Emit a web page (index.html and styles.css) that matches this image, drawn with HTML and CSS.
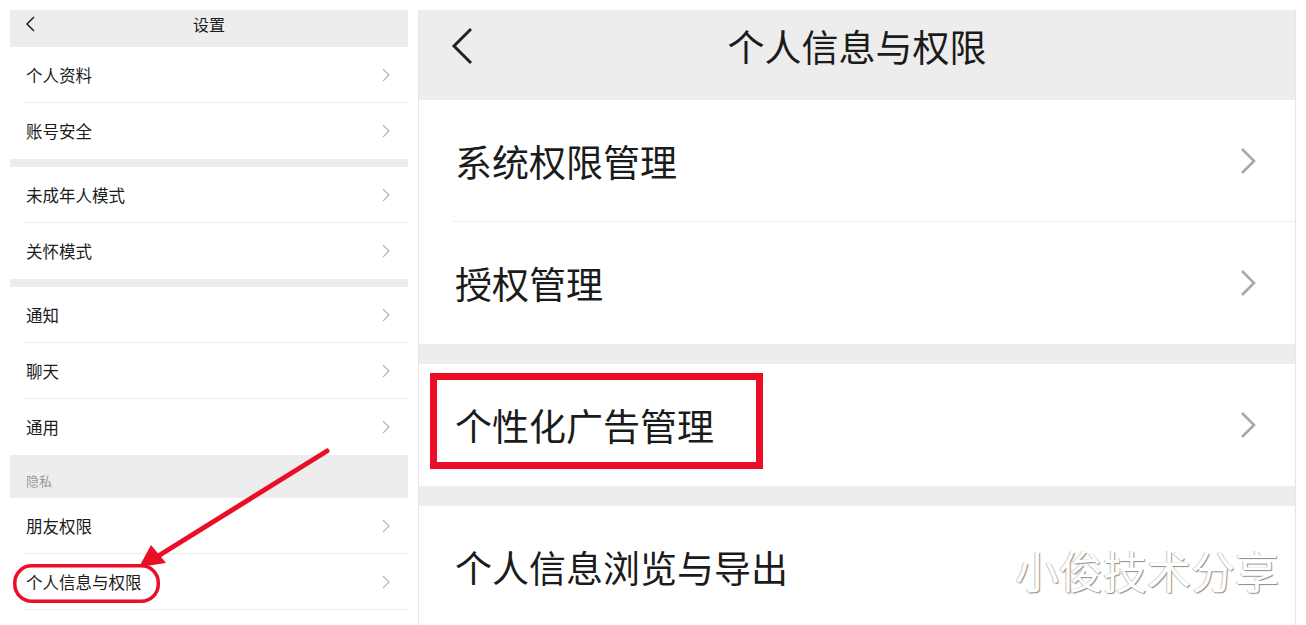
FILE: index.html
```html
<!DOCTYPE html>
<html lang="zh-CN">
<head>
    <meta charset="UTF-8">
    <meta name="viewport" content="width=device-width, initial-scale=1.0">
    <title>个人信息与权限</title>
    <link rel="stylesheet" href="styles.css">
</head>
<body>

    <!-- Left: settings list -->
    <div class="panel-small">
        <div class="nav-small">
            <svg class="back" width="10" height="16" viewBox="0 0 10 16"><polyline points="9,1 2,8 9,15" fill="none" stroke="#222" stroke-width="1.5"/></svg>
            <span class="nav-title">设置</span>
            <span></span>
        </div>

        <div class="row-s">个人资料<svg width="8" height="14" viewBox="0 0 8 14"><polyline points="1,1 7,7 1,13" fill="none" stroke="#b8b8b8" stroke-width="1.3"/></svg></div>
        <div class="row-s last">账号安全<svg width="8" height="14" viewBox="0 0 8 14"><polyline points="1,1 7,7 1,13" fill="none" stroke="#b8b8b8" stroke-width="1.3"/></svg></div>
        <div class="gap-s"></div>

        <div class="row-s">未成年人模式<svg width="8" height="14" viewBox="0 0 8 14"><polyline points="1,1 7,7 1,13" fill="none" stroke="#b8b8b8" stroke-width="1.3"/></svg></div>
        <div class="row-s last">关怀模式<svg width="8" height="14" viewBox="0 0 8 14"><polyline points="1,1 7,7 1,13" fill="none" stroke="#b8b8b8" stroke-width="1.3"/></svg></div>
        <div class="gap-s"></div>

        <div class="row-s">通知<svg width="8" height="14" viewBox="0 0 8 14"><polyline points="1,1 7,7 1,13" fill="none" stroke="#b8b8b8" stroke-width="1.3"/></svg></div>
        <div class="row-s">聊天<svg width="8" height="14" viewBox="0 0 8 14"><polyline points="1,1 7,7 1,13" fill="none" stroke="#b8b8b8" stroke-width="1.3"/></svg></div>
        <div class="row-s last">通用<svg width="8" height="14" viewBox="0 0 8 14"><polyline points="1,1 7,7 1,13" fill="none" stroke="#b8b8b8" stroke-width="1.3"/></svg></div>

        <div class="section-label">隐私</div>
        <div class="row-s">朋友权限<svg width="8" height="14" viewBox="0 0 8 14"><polyline points="1,1 7,7 1,13" fill="none" stroke="#b8b8b8" stroke-width="1.3"/></svg></div>
        <div class="row-s">个人信息与权限<svg width="8" height="14" viewBox="0 0 8 14"><polyline points="1,1 7,7 1,13" fill="none" stroke="#b8b8b8" stroke-width="1.3"/></svg></div>
    </div>

    <!-- Right: zoomed page -->
    <div class="panel-big">
        <div class="nav-big">
            <svg class="back" width="22" height="38" viewBox="0 0 22 38"><polyline points="20,2 3,19 20,36" fill="none" stroke="#222" stroke-width="3"/></svg>
            <span class="nav-title">个人信息与权限</span>
            <span></span>
        </div>

        <div class="row-b">系统权限管理<svg width="16" height="28" viewBox="0 0 16 28"><polyline points="2,2 14,14 2,26" fill="none" stroke="#a8a8a8" stroke-width="2.6"/></svg></div>
        <div class="row-b last">授权管理<svg width="16" height="28" viewBox="0 0 16 28"><polyline points="2,2 14,14 2,26" fill="none" stroke="#a8a8a8" stroke-width="2.6"/></svg></div>
        <div class="gap-b"></div>

        <div class="row-b last">个性化广告管理<svg width="16" height="28" viewBox="0 0 16 28"><polyline points="2,2 14,14 2,26" fill="none" stroke="#a8a8a8" stroke-width="2.6"/></svg></div>
        <div class="gap-b"></div>

        <div class="row-b last">个人信息浏览与导出</div>
    </div>

    <!-- Annotations drawn on top of the screenshots -->
    <svg class="marks" width="1306" height="625" viewBox="0 0 1306 625">
        <rect x="433.5" y="376.5" width="326" height="89" fill="none" stroke="#ea0f27" stroke-width="7"/>
        <rect x="14.8" y="565.8" width="143.5" height="35.5" rx="17" fill="none" stroke="#ea0f27" stroke-width="3.5"/>
        <line x1="327" y1="451" x2="155" y2="558" stroke="#ea0f27" stroke-width="5" stroke-linecap="round"/>
        <polygon points="139,567 151,545 166,563" fill="#ea0f27"/>
    </svg>

    <div class="watermark">小俊技术分享</div>

</body>
</html>
```

FILE: styles.css
```css
/* Global */
* {
    margin: 0;
    padding: 0;
    box-sizing: border-box;
}

body {
    position: relative;
    display: flex;
    gap: 10px;
    width: 1306px;
    height: 625px;
    padding: 10px 10px 0;
    overflow: hidden;
    background: #fff;
    color: #1b1b1b;
    font-family: "Noto Sans CJK SC", "Noto Sans", sans-serif;
}

svg {
    display: block;
    flex-shrink: 0;
}

/* Left panel */
.panel-small {
    width: 398px;
    background: #fff;
}

.nav-small {
    display: grid;
    grid-template-columns: 1fr auto 1fr;
    align-items: center;
    height: 37px;
    padding: 0 15px 9px;
    background: #ededed;
}

.nav-small .nav-title {
    font-size: 16px;
    line-height: 1;
}

.row-s {
    display: flex;
    align-items: center;
    justify-content: space-between;
    height: 56px;
    margin-left: 14px;
    padding: 0 18px 0 2px;
    border-bottom: 1px solid #ececec;
    font-size: 16.5px;
}

.row-s.last {
    border-bottom: none;
}

.gap-s {
    height: 8px;
    background: #ededed;
}

.section-label {
    display: flex;
    align-items: flex-end;
    height: 43px;
    padding: 0 0 11px 16px;
    background: #ededed;
    color: #9a9a9a;
    font-size: 13px;
    line-height: 1;
}

/* Right panel */
.panel-big {
    width: 878px;
    background: #fff;
    border-left: 1px solid #e6e6e6;
    border-right: 1px solid #e6e6e6;
}

.nav-big {
    display: grid;
    grid-template-columns: 1fr auto 1fr;
    align-items: center;
    height: 90px;
    padding: 0 32px 18px;
    background: #ededed;
}

.nav-big .nav-title {
    font-size: 37px;
    line-height: 1;
}

.row-b {
    display: flex;
    align-items: center;
    justify-content: space-between;
    height: 122px;
    margin-left: 34px;
    padding: 0 39px 0 2px;
    border-bottom: 1px solid #efefef;
    font-size: 37px;
}

.row-b.last {
    border-bottom: none;
}

.gap-b {
    height: 20px;
    background: #ededed;
}

/* Overlays */
.marks {
    position: absolute;
    left: 0;
    top: 0;
    pointer-events: none;
}

.watermark {
    position: absolute;
    left: 1015px;
    top: 548px;
    font-size: 44px;
    line-height: 1;
    color: #fff;
    text-shadow: 1px 1px 1px #8a8a8a, -1px 0 0 #c8c8c8;
}
```
